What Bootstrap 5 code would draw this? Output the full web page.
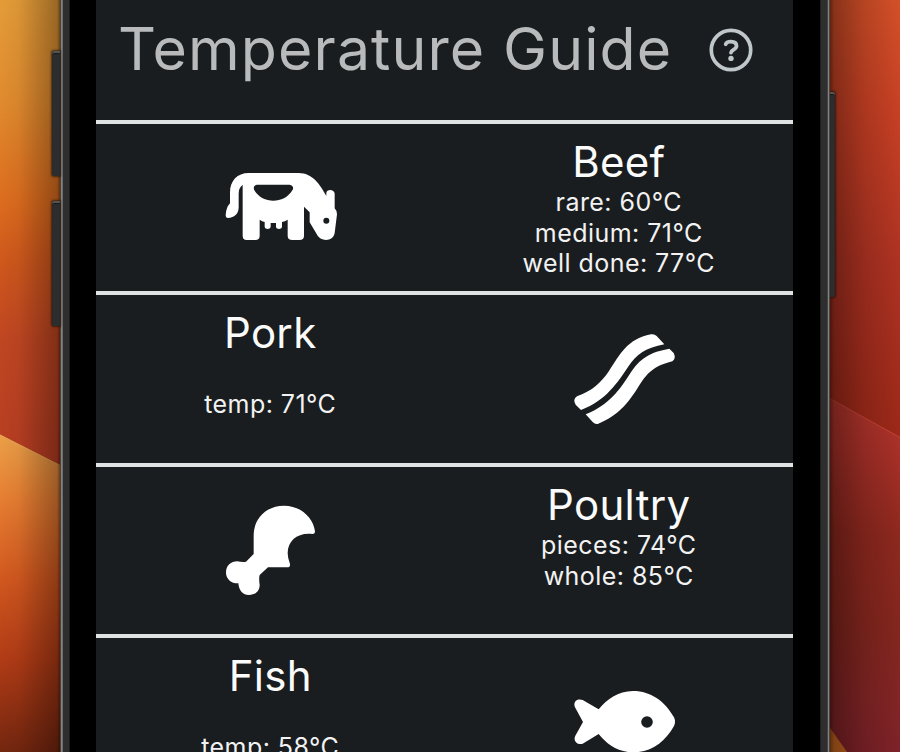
<!DOCTYPE html>
<html lang="en">
<head>
<meta charset="utf-8">
<meta name="viewport" content="width=device-width, initial-scale=1">
<title>Temperature Guide</title>
<link href="https://cdn.jsdelivr.net/npm/bootstrap@5.3.0/dist/css/bootstrap.min.css" rel="stylesheet">
<style>
  body { font-family: Inter, Roboto, "Liberation Sans", sans-serif; background: #8e2a1c; }
  .stage { width: 900px; height: 752px; padding-left: 60px; }
  .wallpaper { left: 0; top: 0; }
  .phone { width: 770px; height: 752px; background: #000; padding: 0 37px 0 36px; }
  .phone::before, .phone::after { content: ""; position: absolute; top: 0; bottom: 0; width: 10px; }
  .phone::before { left: 0; background: linear-gradient(90deg, #4b4038 0 1px, #85827f 1px 2px, #6d6d6c 2px 3px, #2e2e2e 3px 9px, #1c1c1c 9px); }
  .phone::after { right: 0; background: linear-gradient(270deg, #4a4644 0 1px, #858382 1px 2px, #444 2px 3px, #2e2e2e 3px 9px, #1f1f1f 9px); }
  .side-key { background: #2c2d2c; box-shadow: 0 0 2px 1px rgba(20,10,5,.6), inset 0 2px 0 #555352, inset 0 3px 1px #1c1c1c; }
  .key-left { left: -8px; width: 8px; height: 125px; border-radius: 2px 0 0 2px; }
  .key-up { top: 51px; }
  .key-down { top: 201px; }
  .key-right { right: -5px; top: 92px; width: 5px; height: 205px; border-radius: 0 2px 2px 0; }
  .screen { background: #191d1f; color: #fbfbfb; }
  .guide-head { height: 119.600px; padding: 13px 41px 0 22px; }
  .guide-title { font-size: 59px; line-height: 72px; letter-spacing: 1.1px; color: #b9babb; font-weight: 400; }
  .help-icon { width: 44px; height: 44px; margin: 15px -0.5px 0 0; color: #bfc7ca; }
  .guide-row { height: 171.5px; border-top: 4px solid #e0e3e4; }
  .meat-name { font-size: 42px; line-height: 50.5px; letter-spacing: .3px; font-weight: 400; }
  .meat-info { padding-top: 13px; }
  .temps { font-size: 25px; line-height: 30.5px; letter-spacing: .45px; color: #f2f2f2; }
  .meat-icon { width: 90px; height: 90px; overflow: visible; fill: #fff; }
  .hole { fill: #191d1f; }
</style>
</head>
<body>
<div class="stage position-relative overflow-hidden">
  <svg class="wallpaper position-absolute" width="900" height="752" aria-hidden="true">
    <defs>
      <linearGradient id="lt" gradientUnits="userSpaceOnUse" x1="0" y1="0" x2="30" y2="470">
        <stop offset="0" stop-color="#e49c38"/><stop offset=".22" stop-color="#e08a2e"/><stop offset=".43" stop-color="#dc6c1e"/><stop offset=".55" stop-color="#cf581c"/><stop offset=".72" stop-color="#c04622"/><stop offset="1" stop-color="#b63c22"/>
      </linearGradient>
      <linearGradient id="lb" gradientUnits="userSpaceOnUse" x1="0" y1="435" x2="0" y2="752">
        <stop offset="0" stop-color="#eba048"/><stop offset=".2" stop-color="#e67e32"/><stop offset=".45" stop-color="#d2581f"/><stop offset=".7" stop-color="#b23c16"/><stop offset="1" stop-color="#74260f"/>
      </linearGradient>
      <linearGradient id="rt" gradientUnits="userSpaceOnUse" x1="900" y1="0" x2="880" y2="440">
        <stop offset="0" stop-color="#d45028"/><stop offset=".25" stop-color="#c84024"/><stop offset=".6" stop-color="#ae3222"/><stop offset="1" stop-color="#9c2818"/>
      </linearGradient>
      <linearGradient id="rb" gradientUnits="userSpaceOnUse" x1="850" y1="400" x2="850" y2="752">
        <stop offset="0" stop-color="#b4362c"/><stop offset=".14" stop-color="#a83028"/><stop offset=".38" stop-color="#8e281e"/><stop offset=".65" stop-color="#84261e"/><stop offset=".88" stop-color="#822426"/><stop offset="1" stop-color="#7e2228"/>
      </linearGradient>
      <linearGradient id="sl"><stop offset="0" stop-opacity="0"/><stop offset=".3" stop-opacity=".04"/><stop offset=".95" stop-opacity=".32"/><stop offset="1" stop-opacity=".55"/></linearGradient>
      <linearGradient id="sr"><stop offset="0" stop-opacity=".55"/><stop offset=".06" stop-opacity=".35"/><stop offset=".5" stop-opacity=".14"/><stop offset="1" stop-opacity="0"/></linearGradient>
    </defs>
    <rect width="62" height="480" fill="url(#lt)"/>
    <path d="M0 434.500L62 466V752H0z" fill="url(#lb)"/>
    <path d="M0 435L62 466.500" stroke="#e8b060" stroke-opacity=".6"/>
    <rect x="828" width="72" height="450" fill="url(#rt)"/>
    <path d="M828 397L900 437V752H828z" fill="url(#rb)"/>
    <path d="M828 397.500L900 437.500" stroke="#d84c3c" stroke-opacity=".6"/>
    <path d="M828 725L847 752H828z" fill="#c4641e"/>
    <rect width="60" height="752" fill="url(#sl)"/>
    <rect x="830" width="70" height="752" fill="url(#sr)"/>
  </svg>

  <div class="phone position-relative">
    <span class="side-key key-left key-up position-absolute"></span>
    <span class="side-key key-left key-down position-absolute"></span>
    <span class="side-key key-right position-absolute"></span>
    <main class="screen h-100 overflow-hidden">
      <header class="guide-head d-flex justify-content-between align-items-start">
        <h1 class="guide-title mb-0 text-nowrap">Temperature Guide</h1>
        <svg class="help-icon flex-shrink-0" viewBox="0 0 44 44" fill="none" stroke="currentColor" role="img" aria-label="Help">
          <circle cx="22" cy="22" r="19.700" stroke-width="3.700"/>
          <path d="M16.700 16.300C17.400 13.900 19 13.600 22 13.600C25.500 13.600 27.500 15.200 27.500 18C27.500 21.600 22.300 21.500 22 24.600" stroke-width="3.800" stroke-linecap="round"/>
          <circle cx="22" cy="30.400" r="2.700" fill="currentColor" stroke="none"/>
        </svg>
      </header>

      <section class="guide-row row g-0">
        <div class="col-6 d-flex justify-content-center align-items-center">
          <svg class="meat-icon" viewBox="45 9 270 270" aria-hidden="true">
            <path d="M60 133V101C60 65 82 42 116 42H266C307 42 330 76 349 111V103C349 90 373 90 374 104V148Q381 155 381 166L374 222C370 249 330 249 320 225L299 190V160L282 143V230Q282 243 268 243H247Q233 243 233 230V182Q225 187 216 189V203C215 212 199 212 198 203V192H182V203C181 212 165 212 164 203V189Q156 187 149 182V230Q149 243 136 243H110Q98 243 98 230V78Q86 86 86 105V146C85 165 73 175 54 177Q47 177 47 168Q48 146 60 133Z"/>
            <path class="hole" d="M141 77H239C249 78 252 87 247 94C222 136 158 136 133 94C129 86 132 78 141 77Z"/>
            <circle class="hole" cx="349" cy="185" r="9"/>
          </svg>
        </div>
        <div class="col-6 meat-info text-center">
          <h2 class="meat-name mb-0">Beef</h2>
          <div class="temps">rare: 60°C<br>medium: 71°C<br>well done: 77°C</div>
        </div>
      </section>

      <section class="guide-row row g-0">
        <div class="col-6 meat-info text-center">
          <h2 class="meat-name mb-0">Pork</h2>
          <div class="temps"><br>temp: 71°C</div>
        </div>
        <div class="col-6 d-flex justify-content-center align-items-center">
          <svg class="meat-icon" viewBox="42 42 270 270" aria-hidden="true">
            <path d="M63 270L47 254Q37 239 51 229C99 211 121 190 147 153C181 103 200 58 273 43Q283 41 290 48L313 73C258 83 229 103 204 141C172 188 140 240 63 270Z"/>
            <path d="M77 283C150 253 179 208 208 164C240 113 272 96 328 86L341 99Q349 115 337 124C280 138 261 160 236 199C204 250 177 285 115 311Q106 314 98 306Z"/>
          </svg>
        </div>
      </section>

      <section class="guide-row row g-0">
        <div class="col-6 d-flex justify-content-center align-items-center">
          <svg class="meat-icon" viewBox="45 45 270 270" aria-hidden="true">
            <path d="M131 192V136C131 83 172 47 222 47C273 47 310 84 315 124Q315 132 307 132C264 127 233 151 233 190Q233 203 240 222Q241 232 232 232H174L149 255Q146 264 149 285C149 304 135 315 117 315C99 315 87 303 85 280C65 281 48 267 48 248C48 226 63 214 82 214Q98 217 108 215Z"/>
          </svg>
        </div>
        <div class="col-6 meat-info text-center">
          <h2 class="meat-name mb-0">Poultry</h2>
          <div class="temps">pieces: 74°C<br>whole: 85°C</div>
        </div>
      </section>

      <section class="guide-row row g-0">
        <div class="col-6 meat-info text-center">
          <h2 class="meat-name mb-0">Fish</h2>
          <div class="temps"><br>temp: 58°C</div>
        </div>
        <div class="col-6 d-flex justify-content-center align-items-center">
          <svg class="meat-icon" viewBox="42 21 270 270" aria-hidden="true">
            <path d="M116 118C140 88 174 63 219 63C274 63 315 95 342 142Q348 156 342 168C315 216 274 247 219 247C174 247 140 222 116 192L68 221C53 227 38 212 46 197L69 156L45 112C38 95 52 84 68 90Z"/>
            <circle class="hole" cx="261" cy="156" r="17.500"/>
          </svg>
        </div>
      </section>
    </main>
  </div>
</div>
<script src="https://cdn.jsdelivr.net/npm/bootstrap@5.3.0/dist/js/bootstrap.bundle.min.js"></script>
</body>
</html>
